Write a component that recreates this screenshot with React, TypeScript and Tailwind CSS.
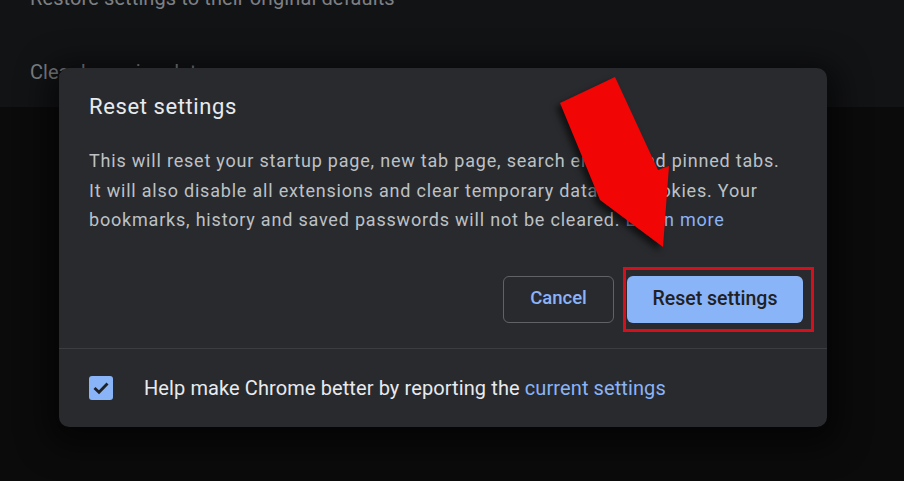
import React from "react";

export default function App() {
  return (
    <div
      className="relative w-[904px] h-[481px] overflow-hidden bg-[#0b0b0c]"
      style={{ fontFamily: "Roboto, 'Noto Sans', Arial, sans-serif" }}
    >
      {/* background settings page */}
      <div className="h-[107px] bg-[#121315] flex flex-col">
        <div className="h-[36px] flex items-start pl-[30px]">
          <span className="text-[20px] leading-[20px] text-[#7d8084] -mt-[12px] tracking-[0.1px]">
            Restore settings to their original defaults
          </span>
        </div>
        <div className="h-[71px] flex items-center pl-[30px]">
          <span className="text-[20px] text-[#7d8084]">Clear browsing data</span>
        </div>
      </div>

      {/* dialog */}
      <div className="absolute left-[59px] top-[68px] w-[768px] h-[359px] rounded-[10px] bg-[#292a2d] shadow-[0_8px_30px_12px_rgba(0,0,0,0.55)] flex flex-col">
        <div className="px-[30px] pt-[25px]">
          <h1 className="text-[22px] leading-[28px] text-[#e8eaed] tracking-[0.6px]">Reset settings</h1>
          <p className="mt-[25px] text-[18px] leading-[29.5px] text-[#bdc1c6] tracking-[0.8px] whitespace-nowrap">
            This will reset your startup page, new tab page, search engine and pinned tabs.
            <br />
            It will also disable all extensions and clear temporary data like cookies. Your
            <br />
            bookmarks, history and saved passwords will not be cleared.{" "}
            <span className="text-[#8ab4f8]">Learn more</span>
          </p>
        </div>
        <div className="flex justify-end gap-[13px] pr-[24px] mt-[41px]">
          <button className="w-[111px] h-[47px] rounded-[6px] border border-[#5f6368] text-[#8ab4f8] text-[18.5px] font-medium">
            Cancel
          </button>
          <div className="relative">
            <button className="w-[176px] h-[47px] rounded-[6px] bg-[#8ab4f8] text-[#202124] text-[19.5px] font-medium">
              Reset settings
            </button>
            <div className="absolute left-[-4px] top-[-9px] w-[191px] h-[65px] border-[3px] border-[#d4101c]" />
          </div>
        </div>
        <div className="mt-auto h-[79px] border-t border-[#3c3d41] flex items-center pl-[30px]">
          <div className="w-[24px] h-[24px] rounded-[3px] bg-[#8ab4f8] flex items-center justify-center">
            <svg width="20" height="20" viewBox="0 0 20 20">
              <path d="M3.5 10 L8 14.3 L16.5 5.5" fill="none" stroke="#202124" strokeWidth="2.8" />
            </svg>
          </div>
          <span className="ml-[31px] text-[20px] text-[#e8eaed] tracking-[0.1px]">
            Help make Chrome better by reporting the <span className="text-[#8ab4f8]">current settings</span>
          </span>
        </div>
      </div>

      {/* red arrow */}
      <svg
        className="absolute left-0 top-0 drop-shadow-[-4px_4px_3px_rgba(0,0,0,0.6)]"
        width="904"
        height="481"
        viewBox="0 0 904 481"
      >
        <polygon points="560,103 615,77 658,170 669,166 663,247 600,200" fill="#f20505" />
      </svg>
    </div>
  );
}
